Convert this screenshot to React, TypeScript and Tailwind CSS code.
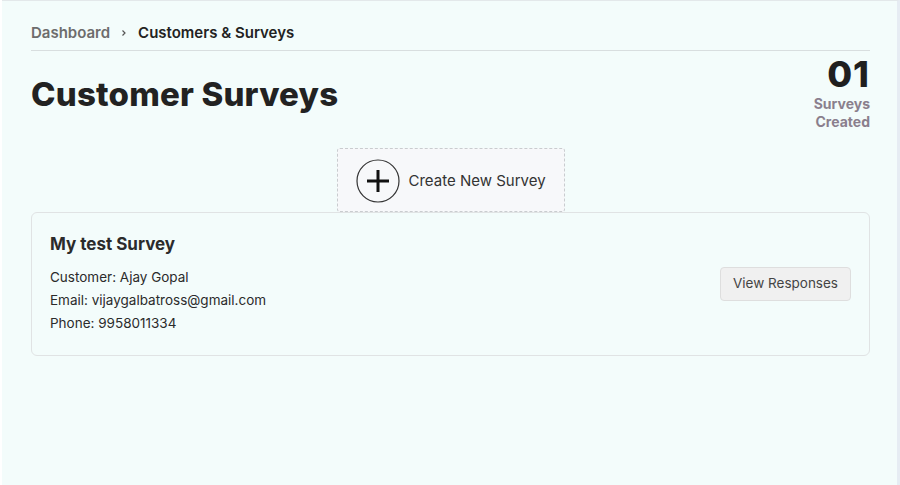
import React from 'react';

const FONT = { fontFamily: 'Inter, "Noto Sans", sans-serif' };

const App: React.FC = () => {
  return (
    <div className="w-[900px] h-[485px] bg-white pl-[2px]" style={FONT}>
      <div className="h-full bg-[#f3fcfb] border-t border-[#e3e8ea] border-r-[3px] border-r-[#e6ecf3] pl-[29px] pr-[27px] pt-[21px]">
        {/* Breadcrumb */}
        <div className="flex items-center gap-[9px] text-[15px] font-semibold pb-[5px] border-b border-[#d8dedf]">
          <span className="text-[#6d6d6d]">Dashboard</span>
          <svg width="8" height="8" viewBox="0 0 8 8" className="mx-[1px]">
            <path d="M2.5 1.5 L5 4 L2.5 6.5" fill="none" stroke="#555" strokeWidth="1.2" />
          </svg>
          <span className="text-[#222]">Customers &amp; Surveys</span>
        </div>

        {/* Header */}
        <div className="flex justify-between items-start">
          <h1 className="mt-[23px] text-[33px] leading-[40px] font-extrabold text-[#222] tracking-[0.2px]">Customer Surveys</h1>
          <div className="mt-[3px] flex flex-col items-end">
            <span className="text-[36px] leading-[40px] font-extrabold text-[#1f1f1f] tracking-[1px]">01</span>
            <span className="mt-[1px] text-[14px] leading-[18px] font-bold text-[#8a7f8d] text-right w-[70px]">Surveys Created</span>
          </div>
        </div>

        {/* Create */}
        <div className="flex justify-center mt-[17px]">
          <button className="w-[228px] h-[64px] flex items-center gap-[9px] pl-[18px] pt-[3px] border border-dashed border-[#c9cccf] rounded-[3px] bg-[#f7f8fa]">
            <svg width="44" height="44" viewBox="0 0 44 44">
              <circle cx="22" cy="22" r="21" fill="none" stroke="#333" strokeWidth="1.2" />
              <path d="M22 11 V33 M11 22 H33" stroke="#111" strokeWidth="3" />
            </svg>
            <span className="text-[15px] text-[#333]">Create New Survey</span>
          </button>
        </div>

        {/* Card */}
        <div className="border border-[#e0e3e4] rounded-[6px] px-[18px] pt-[20px] pb-[20px] flex items-center justify-between">
          <div>
            <h2 className="text-[17px] leading-[22px] font-bold text-[#2b2b2b]">My test Survey</h2>
            <div className="mt-[11px] text-[13.5px] leading-[23px] text-[#2b2b2b]">
              <p>Customer: Ajay Gopal</p>
              <p>Email: vijaygalbatross@gmail.com</p>
              <p>Phone: 9958011334</p>
            </div>
          </div>
          <button className="w-[131px] h-[34px] bg-[#f0f0f0] border border-[#dedede] rounded-[4px] text-[13.5px] text-[#444]">
            View Responses
          </button>
        </div>
      </div>
    </div>
  );
};

export default App;
